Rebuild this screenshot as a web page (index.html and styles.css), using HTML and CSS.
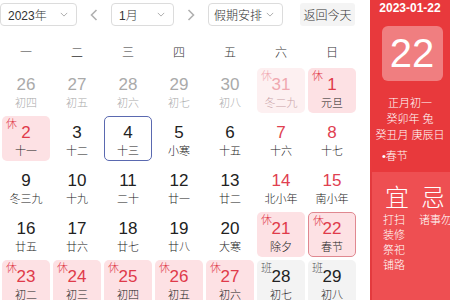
FILE: index.html
```html
<!DOCTYPE html>
<html lang="zh-CN">
<head>
  <meta charset="UTF-8">
  <title>万年历</title>
  <link rel="stylesheet" href="styles.css">
</head>
<body>
  <div class="calendar">
    <div class="main">
      <div class="toolbar">
        <div class="select year-select">2023年<svg class="chev" viewBox="0 0 10 6"><path d="M1 1l4 4 4-4" /></svg></div>
        <span class="arrow"><svg viewBox="0 0 8 12"><path d="M6.5 1l-5 5 5 5" /></svg></span>
        <div class="select month-select">1月<svg class="chev" viewBox="0 0 10 6"><path d="M1 1l4 4 4-4" /></svg></div>
        <span class="arrow"><svg viewBox="0 0 8 12"><path d="M1.5 1l5 5-5 5" /></svg></span>
        <div class="select holiday-select">假期安排<svg class="chev" viewBox="0 0 10 6"><path d="M1 1l4 4 4-4" /></svg></div>
        <button class="today-btn">返回今天</button>
      </div>
      <div class="weekdays">
        <span>一</span><span>二</span><span>三</span><span>四</span><span>五</span><span>六</span><span>日</span>
      </div>
      <div class="days" id="days"></div>
    </div>
    <div class="side">
      <div class="side-top">
        <div class="side-date">2023-01-22</div>
        <div class="big-day">22</div>
        <div class="lunar-line">正月初一</div>
        <div class="lunar-line">癸卯年 兔</div>
        <div class="lunar-line">癸丑月 庚辰日</div>
        <div class="festival">•春节</div>
      </div>
      <div class="side-bottom">
        <div class="yiji">
          <div class="col">
            <div class="yj-title">宜</div>
            <div class="yj-item">打扫</div>
            <div class="yj-item">装修</div>
            <div class="yj-item">祭祀</div>
            <div class="yj-item">铺路</div>
          </div>
          <div class="col">
            <div class="yj-title">忌</div>
            <div class="yj-item nowrap">诸事勿取</div>
          </div>
        </div>
      </div>
    </div>
  </div>

  <script>
    // 每一格: [日, 农历, 类型]
    // 类型: o=上月/下月, r=周末红字, h=休, oh=上月的休, w=班, s=选中, t=今天
    const days = [
      ['26', '初四', 'o'], ['27', '初五', 'o'], ['28', '初六', 'o'], ['29', '初七', 'o'], ['30', '初八', 'o'], ['31', '冬二九', 'oh'], ['1', '元旦', 'h'],
      ['2', '十一', 'h'], ['3', '十二', ''], ['4', '十三', 's'], ['5', '小寒', ''], ['6', '十五', ''], ['7', '十六', 'r'], ['8', '十七', 'r'],
      ['9', '冬三九', ''], ['10', '十九', ''], ['11', '二十', ''], ['12', '廿一', ''], ['13', '廿二', ''], ['14', '北小年', 'r'], ['15', '南小年', 'r'],
      ['16', '廿五', ''], ['17', '廿六', ''], ['18', '廿七', ''], ['19', '廿八', ''], ['20', '大寒', ''], ['21', '除夕', 'h'], ['22', '春节', 'h t'],
      ['23', '初二', 'h'], ['24', '初三', 'h'], ['25', '初四', 'h'], ['26', '初五', 'h'], ['27', '初六', 'h'], ['28', '初七', 'w'], ['29', '初八', 'w']
    ];

    const grid = document.getElementById('days');
    days.forEach(d => {
      const cell = document.createElement('div');
      cell.className = 'day';
      d[2].split(' ').forEach(c => {
        if (c) cell.classList.add('day-' + c);
      });
      let tag = '';
      if (d[2].indexOf('h') >= 0) tag = '<span class="tag">休</span>';
      if (d[2] === 'w') tag = '<span class="tag">班</span>';
      cell.innerHTML = tag + '<span class="num">' + d[0] + '</span><span class="lunar">' + d[1] + '</span>';
      grid.appendChild(cell);
    });
  </script>
</body>
</html>
```

FILE: styles.css
```css
body {
  margin: 0;
  font-family: "Liberation Sans", "Noto Sans CJK SC", sans-serif;
  font-weight: 300;
  color: #222;
  background: #fff;
  width: 450px;
  height: 300px;
  overflow: hidden;
}
.calendar {
  display: flex;
  height: 300px;
}
.main {
  width: 370px;
  flex-shrink: 0;
}
.toolbar {
  display: flex;
  align-items: center;
  height: 23px;
  padding-top: 3px;
  font-size: 12px;
}
.select {
  box-sizing: border-box;
  height: 23px;
  border: 1px solid #dcdcdc;
  border-radius: 4px;
  display: flex;
  align-items: center;
  justify-content: space-between;
  padding: 0 8px 0 7px;
  color: #333;
}
.chev {
  width: 8px;
  height: 5px;
  fill: none;
  stroke: #aaa;
  stroke-width: 1.2;
}
.year-select {
  width: 77px;
}
.month-select {
  width: 63px;
}
.holiday-select {
  width: 75px;
  padding-left: 5px;
}
.arrow {
  width: 34px;
  display: flex;
  justify-content: center;
}
.arrow svg {
  width: 8px;
  height: 12px;
  fill: none;
  stroke: #b0b0b0;
  stroke-width: 1.6;
}
.today-btn {
  margin-left: 17px;
  height: 23px;
  width: 55px;
  border: none;
  border-radius: 3px;
  background: #f4f4f4;
  color: #333;
  font-family: inherit;
  font-weight: 300;
  font-size: 12px;
  padding: 0;
}
.weekdays {
  display: grid;
  grid-template-columns: repeat(7, 48px);
  column-gap: 3px;
  padding-left: 2px;
  margin-top: 15px;
  height: 27px;
  font-size: 12px;
  color: #333;
}
.weekdays span {
  text-align: center;
  line-height: 24px;
}
.days {
  display: grid;
  grid-template-columns: repeat(7, 48px);
  grid-auto-rows: 45px;
  gap: 3px;
  padding-left: 2px;
}
.day {
  position: relative;
  box-sizing: border-box;
  border-radius: 5px;
  display: flex;
  flex-direction: column;
  align-items: center;
  padding-top: 7px;
}
.num {
  font-size: 17px;
  line-height: 20px;
  font-weight: normal;
}
.lunar {
  font-size: 11px;
  line-height: 14px;
  margin-top: 1px;
}
.tag {
  position: absolute;
  left: 4px;
  top: 2px;
  font-size: 11px;
  line-height: 13px;
}
.day-o {
  color: #aaa;
}
.day-r .num {
  color: #e04050;
}
.day-h {
  background: #fde1e4;
}
.day-h .num, .day-h .tag {
  color: #e03a4a;
}
.day-oh {
  background: #fdf0f1;
  color: #c9a3a8;
}
.day-oh .num, .day-oh .tag {
  color: #f0a8b0;
}
.day-w {
  background: #f3f3f3;
}
.day-w .tag {
  color: #555;
}
.day-s {
  border: 1px solid #5a69b0;
  padding-top: 6px;
}
.day-t {
  border: 1px solid #e08890;
  padding-top: 6px;
}
.side {
  width: 80px;
  display: flex;
  flex-direction: column;
  color: #fff;
}
.side-top {
  background: #e8393c;
  height: 172px;
  display: flex;
  flex-direction: column;
  align-items: center;
}
.side-date {
  font-size: 12px;
  font-weight: bold;
  margin-top: 1px;
  line-height: 14px;
}
.big-day {
  width: 61px;
  height: 55px;
  margin-top: 11px;
  margin-left: 4px;
  border-radius: 6px;
  background: rgba(255, 255, 255, 0.35);
  font-size: 40px;
  font-weight: normal;
  line-height: 55px;
  text-align: center;
}
.lunar-line {
  font-size: 11px;
  line-height: 16px;
}
.big-day + .lunar-line {
  margin-top: 14px;
}
.festival {
  align-self: flex-start;
  margin-left: 12px;
  margin-top: 6px;
  font-size: 11px;
  line-height: 14px;
}
.side-bottom {
  flex: 1;
  background: #ee4f52;
  border-left: 2px solid #e33a3e;
  overflow: hidden;
}
.yiji {
  display: flex;
  padding-left: 11px;
  padding-top: 11px;
}
.col {
  width: 36px;
  flex-shrink: 0;
}
.yj-title {
  font-size: 24px;
  line-height: 30px;
  padding-left: 2px;
}
.yj-item {
  font-size: 11px;
  line-height: 15px;
}
.nowrap {
  white-space: nowrap;
}
```
